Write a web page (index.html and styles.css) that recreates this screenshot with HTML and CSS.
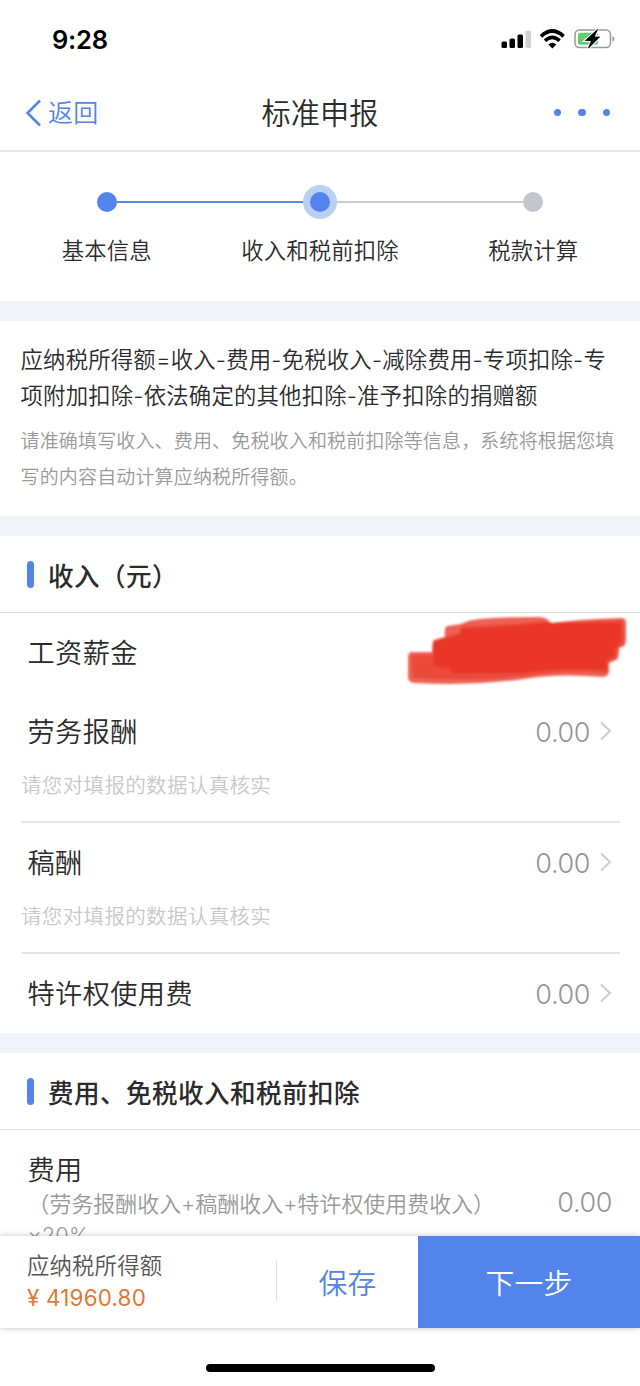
FILE: index.html
```
<!DOCTYPE html>
<html lang="zh-CN">
<head>
<meta charset="utf-8">
<title>标准申报</title>
<link rel="stylesheet" href="styles.css">
</head>
<body>
<div class="screen">
  <div class="status">
    <span class="time">9:28</span>
    <svg class="indicators" width="116" height="24" viewBox="0 0 116 24">
      <rect x="1.5" y="13.500" width="5.500" height="6.500" rx="1.5"/>
      <rect x="9.5" y="10.500" width="5.500" height="9.500" rx="1.5"/>
      <rect x="17.5" y="6.500" width="5.500" height="13.500" rx="1.5"/>
      <rect x="25.5" y="2.500" width="5.500" height="17.500" rx="1.5" fill="#d0d0d0"/>
      <path d="M41 8.3Q52.3-2.2 63.6 8.3" fill="none" stroke="#000" stroke-width="3.7"/>
      <path d="M45 12.8Q52.3 6 59.6 12.8" fill="none" stroke="#000" stroke-width="3.5"/>
      <path d="M48.3 16.5Q52.3 13 56.3 16.500L52.3 20.500Z"/>
      <rect x="75" y="2" width="35.500" height="17.500" rx="4.500" fill="#fff" stroke="#999" stroke-width="1.500"/>
      <rect x="78" y="4.700" width="20" height="12" rx="2" fill="#62cc70"/>
      <path d="M112.500 8v6q4-3 0-6z" fill="#999"/>
      <path d="M97.500 1.500L85.500 12.500h6L88.500 20 99.500 9h-5.500z" fill="#000" stroke="#fff" stroke-width="3" paint-order="stroke"/>
      <path d="M97.500 1.500L85.500 12.500h6L88.500 20 99.500 9h-5.500z" stroke="#000" stroke-width=".8"/>
    </svg>
  </div>
  <header class="nav">
    <a class="back"><svg width="16" height="28" viewBox="0 0 16 28"><path d="M15 1.500L2.500 14L15 26.500" fill="none" stroke="#5384ec" stroke-width="2.500"/></svg><span>返回</span></a>
    <h1 class="title">标准申报</h1>
    <div class="more"><i class="dot"></i><i class="dot"></i><i class="dot"></i></div>
  </header>
  <main class="content">
    <section class="steps">
      <div class="step done"><div class="track"><i class="node"></i></div><span>基本信息</span></div>
      <div class="step current"><div class="track"><i class="node"></i></div><span>收入和税前扣除</span></div>
      <div class="step"><div class="track"><i class="node"></i></div><span>税款计算</span></div>
    </section>
    <section class="intro">
      <p class="formula">应纳税所得额=收入-费用-免税收入-减除费用-专项扣除-专<br>项附加扣除-依法确定的其他扣除-准予扣除的捐赠额</p>
      <p class="help">请准确填写收入、费用、免税收入和税前扣除等信息，系统将根据您填<br>写的内容自动计算应纳税所得额。</p>
    </section>
    <section class="card income">
      <h2 class="heading">收入（元）</h2>
      <div class="row salary"><span class="label">工资薪金</span>
        <svg class="redaction" width="222" height="70" viewBox="0 0 222 70">
          <g fill="#e93626">
            <path opacity=".78" d="M4 35Q1 36 1 40V61Q2 66 8 66Q65 69 117 62Q150 56 195 60Q201 60 202 55V46L209 43Q212 41 212 34V31L217 29Q219 27 219 22V5Q219 1 214 1Q174 2 144 6Q140 0 132 0Q75 0 61 4L54 7L40 9Q37 10 38 20L27 23Q25 24 25 35Z"/>
            <path d="M54 9Q98 8 136 4L145 6L214 3Q218 4 217 21V29L211 31L210 41L201 45V56Q155 53 125 58Q75 65 6 61L4 38L26 38V24L40 19L53 16Z" opacity=".55"/>
            <path d="M54 12Q105 9 140 6L214 6V24L207 32V39L199 44V53Q148 50 116 56L45 56L44 52L27 49V25L39 22L53 17Z"/>
          </g>
        </svg>
      </div>
      <div class="row"><span class="label">劳务报酬</span><span class="value">0.00</span><svg class="arrow" width="13" height="20" viewBox="0 0 13 20"><path d="M2 1.500L11 10L2 18.500" fill="none" stroke="#ccc" stroke-width="2"/></svg></div>
      <p class="note">请您对填报的数据认真核实</p>
      <div class="row"><span class="label">稿酬</span><span class="value">0.00</span><svg class="arrow" width="13" height="20" viewBox="0 0 13 20"><path d="M2 1.500L11 10L2 18.500" fill="none" stroke="#ccc" stroke-width="2"/></svg></div>
      <p class="note">请您对填报的数据认真核实</p>
      <div class="row"><span class="label">特许权使用费</span><span class="value">0.00</span><svg class="arrow" width="13" height="20" viewBox="0 0 13 20"><path d="M2 1.500L11 10L2 18.500" fill="none" stroke="#ccc" stroke-width="2"/></svg></div>
    </section>
    <section class="card">
      <h2 class="heading">费用、免税收入和税前扣除</h2>
      <div class="expense">
        <div class="detail"><div class="label">费用</div><p class="basis">（劳务报酬收入+稿酬收入+特许权使用费收入）<br>×20%</p></div>
        <span class="value">0.00</span>
      </div>
    </section>
  </main>
  <footer class="bar">
    <div class="total"><div class="total-label">应纳税所得额</div><div class="amount">¥ 41960.80</div></div>
    <button class="save">保存</button>
    <button class="next">下一步</button>
  </footer>
  <div class="home"><i class="handle"></i></div>
</div>
</body>
</html>
```
FILE: styles.css
```
* { box-sizing: border-box; }
body { margin: 0; background: #fff; color: #2b2b2b; font-family: Inter, "Noto Sans CJK SC", sans-serif; font-weight: 350; }
h1, h2, p { margin: 0; font-weight: inherit; }
button { border: 0; padding: 0; background: none; font: inherit; }
svg { display: block; flex: none; }
.screen { width: 640px; height: 1386px; display: flex; flex-direction: column; overflow: hidden; }

.status { height: 75px; flex: none; display: flex; justify-content: space-between; align-items: flex-start; padding: 28px 24px 0 52px; }
.time { font-size: 25.5px; line-height: 24px; font-weight: 600; letter-spacing: -.2px; color: #000; }

.nav { height: 77px; flex: none; display: grid; grid-template-columns: 1fr auto 1fr; align-items: center; border-bottom: 2px solid #e6e6e6; padding: 0 30px 0 25px; }
.back { display: flex; align-items: center; gap: 7px; color: #5384ec; font-size: 25px; letter-spacing: .2px; line-height: 30px; }
.title { font-size: 29.200px; letter-spacing: .1px; line-height: 40px; padding: 2px 0 0 5px; }
.more { display: flex; justify-content: flex-end; gap: 17px; }
.dot { width: 7.500px; height: 7.500px; border-radius: 50%; background: #5384ec; }

.content { flex: 1; min-height: 0; overflow: hidden; background: #f2f3f8; display: flex; flex-direction: column; gap: 20px; }
.content > section { flex: none; background: #fff; }

.steps { height: 149px; display: grid; grid-template-columns: repeat(3, 1fr); padding-top: 32px; }
.step { display: flex; flex-direction: column; align-items: center; font-size: 22.400px; letter-spacing: .1px; line-height: 32px; gap: 16px; white-space: nowrap; }
.track { width: 100%; height: 35px; display: flex; align-items: center; }
.track::before, .track::after { content: ""; flex: 1; height: 2px; background: #ccc; }
.step:first-child .track::before, .step:last-child .track::after { background: none; }
.done .track::after, .current .track::before { background: #5c86dd; }
.node { width: 20px; height: 20px; border-radius: 50%; background: #c5c5d0; }
.done .node, .current .node { background: #5384ec; }
.current .node { width: 34px; height: 34px; border: 7px solid #bad0f3; }

.intro { height: 195px; padding: 21px 0 0 20.500px; white-space: nowrap; }
.formula { font-size: 22.400px; letter-spacing: .18px; line-height: 36px; }
.help { margin-top: 10px; font-size: 19px; letter-spacing: .16px; line-height: 36px; color: #999; }

.heading { height: 77px; display: flex; align-items: center; gap: 14px; padding-left: 27px; border-bottom: 1px solid #e0e0e0; font-size: 25.600px; letter-spacing: .4px; font-weight: 500; }
.heading::before { content: ""; width: 7px; height: 27px; border-radius: 3.500px; background: #5384ec; }
.income { height: 497px; }
.row { height: 78px; display: flex; align-items: center; padding: 3px 28px 0 27.500px; }
.salary { position: relative; height: 79px; }
.label { font-size: 27.200px; letter-spacing: .4px; line-height: 38px; }
.value { margin-left: auto; font-size: 27px; font-weight: 350; line-height: 36px; letter-spacing: -.4px; color: #959595; }
.arrow { margin: 0 0 4px 9px; }
.redaction { position: absolute; left: 407px; top: 4px; filter: blur(.8px); }
.note { height: 53px; margin: 0 20px 0 21px; padding-top: 2px; border-bottom: 2px solid #e5e5e5; color: #c7c7cc; font-size: 20.500px; letter-spacing: .35px; line-height: 28px; }
.expense { display: flex; height: 146px; align-items: center; padding: 0 28px 0 27.500px; }
.detail { align-self: flex-start; padding-top: 22px; }
.basis { margin-top: -1px; font-size: 21.900px; letter-spacing: .05px; line-height: 31px; color: #999; white-space: nowrap; }

.bar { position: relative; height: 92px; flex: none; display: grid; grid-template-columns: 276px 142px 222px; background: #fff; box-shadow: 0 0 6px rgba(0, 0, 0, .25); }
.total { margin: 0; padding: 15px 0 0 27px; }
.total-label { font-size: 22.400px; letter-spacing: .15px; line-height: 30px; color: #555; }
.amount { font-size: 22.400px; letter-spacing: .2px; font-weight: 400; line-height: 34px; color: #df7836; }
.save { display: flex; align-items: center; justify-content: center; color: #5384ec; font-size: 28.800px; letter-spacing: .2px; padding-bottom: 2px; }
.save::before { content: ""; width: 1px; height: 40px; background: #ddd; margin-right: auto; }
.save::after { content: ""; margin-left: auto; }
.next { background: #5384ec; color: #fff; font-size: 28.800px; letter-spacing: .2px; padding-bottom: 2px; }
.home { height: 58px; flex: none; display: flex; justify-content: center; padding-top: 36px; }
.handle { width: 229px; height: 8px; border-radius: 4px; background: #000; }
```
